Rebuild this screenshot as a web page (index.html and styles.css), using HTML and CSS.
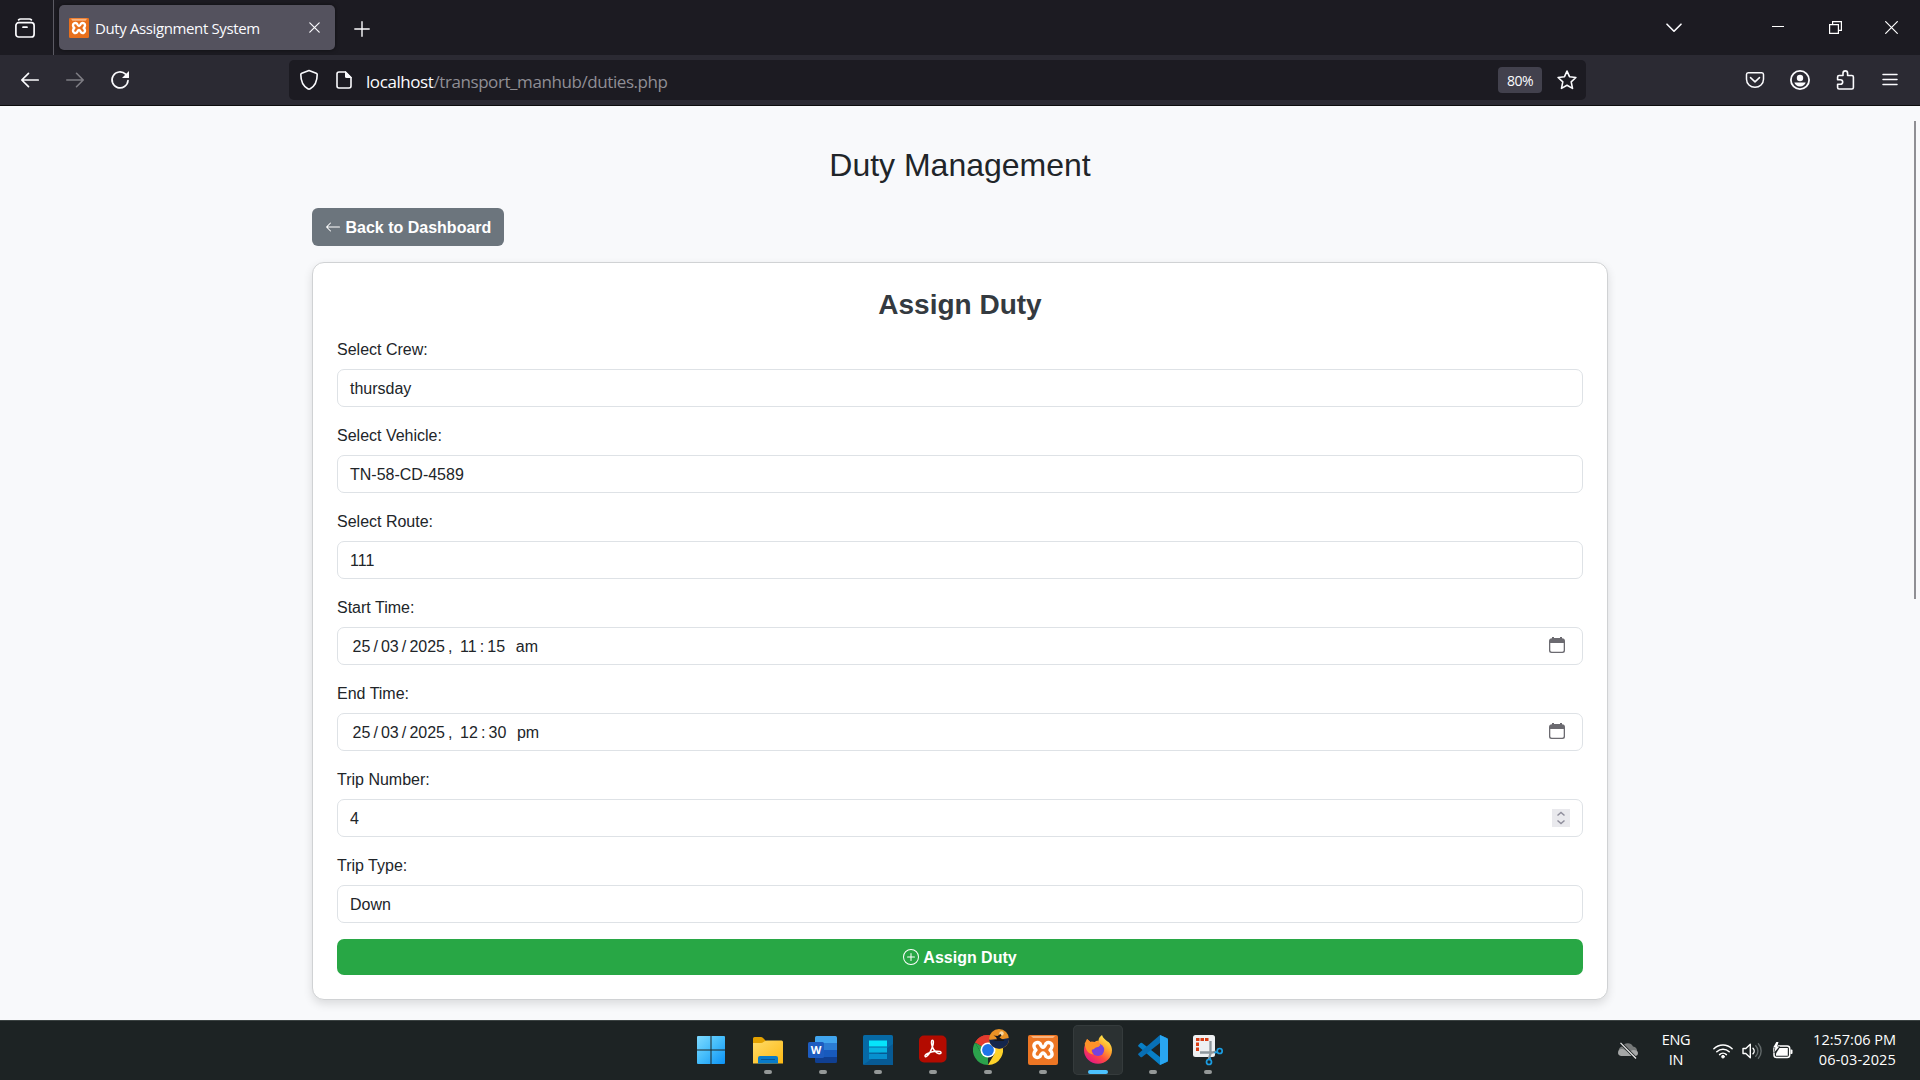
FILE: index.html
```html
<!DOCTYPE html>
<html lang="en">
<head>
<meta charset="utf-8">
<title>Duty Assignment System</title>
<link rel="stylesheet" href="styles.css">
</head>
<body>
<header class="tabbar">
  <div class="overview">
    <svg width="20" height="20" viewBox="0 0 20 20" fill="none" stroke="#fbfbfe" stroke-width="1.7" stroke-linecap="round"><path d="M3.6 1.9Q4.4 1 5.6 1h8.8q1.200 0 2 .9"/><rect x=".9" y="4.700" width="18.200" height="14.300" rx="2.800"/><path d="M8 9.200h4"/></svg>
  </div>
  <div class="tab">
    <svg width="20" height="20" viewBox="0 0 30 30"><rect width="30" height="30" rx="2" fill="#e9701c"/><path d="M3 1h24l-2 3H5z" fill="#f8b37f"/><path d="M12 8.500C9 6 5.500 8.500 6 11.500Q6.300 13.500 8 15 6.300 16.500 6 18.500C5.500 21.500 9 24 12 21.500Q13.500 18 15 18T18 21.500C21 24 24.500 21.500 24 18.500Q23.700 16.500 22 15 23.700 13.500 24 11.500C24.500 8.500 21 6 18 8.500Q16.500 12.200 15 12.200T12 8.500z" fill="none" stroke="#fff" stroke-width="3.600" stroke-linejoin="round"/></svg>
    <span class="tab-title">Duty Assignment System</span>
    <svg class="tab-close" width="11" height="11" viewBox="0 0 11 11" stroke="#fbfbfe" stroke-width="1.200" stroke-linecap="round"><path d="M.8.8l9.400 9.400M10.200.8L.8 10.200"/></svg>
  </div>
  <svg class="new-tab" width="16" height="16" viewBox="0 0 16 16" stroke="#fbfbfe" stroke-width="1.400" stroke-linecap="round"><path d="M8 .8v14.400M.8 8h14.400"/></svg>
  <div class="window-controls">
    <svg class="list-tabs" width="16" height="10" viewBox="0 0 16 10" fill="none" stroke="#fbfbfe" stroke-width="1.600" stroke-linecap="round" stroke-linejoin="round"><path d="M1 1.200l7 7 7-7"/></svg>
    <svg class="minimize" width="12" height="12" viewBox="0 0 12 12" stroke="#fff"><path d="M0 4.500h12"/></svg>
    <svg class="restore" width="13" height="13" viewBox="0 0 13 13" fill="none" stroke="#fff" stroke-width="1.200"><path d="M.6 3.600h8.800v8.800H.6zM3.600 3.500V.6h8.800v8.800H9.500"/></svg>
    <svg width="13" height="13" viewBox="0 0 13 13" stroke="#fff" stroke-width="1.200"><path d="M.3.3l12.400 12.400M12.700.3L.3 12.700"/></svg>
  </div>
</header>

<nav class="toolbar">
  <div class="nav-buttons">
    <svg width="20" height="20" viewBox="0 0 20 20" fill="none" stroke="#fbfbfe" stroke-width="1.700" stroke-linecap="round" stroke-linejoin="round"><path d="M18.200 10H2M8.500 3.300L1.800 10l6.700 6.700"/></svg>
    <svg width="20" height="20" viewBox="0 0 20 20" fill="none" stroke="#7e7d84" stroke-width="1.600" stroke-linecap="round" stroke-linejoin="round"><path d="M1.800 10H18M11.500 3.300l6.700 6.700-6.700 6.700"/></svg>
    <svg width="20" height="20" viewBox="0 0 20 20"><path d="M18 10.500A8 8 0 1 1 15.600 4.200" fill="none" stroke="#fbfbfe" stroke-width="1.700" stroke-linecap="round"/><path d="M19 1v6.500q0 .5-.5.500H12z" fill="#fbfbfe"/></svg>
  </div>
  <div class="urlbar">
    <svg width="20" height="22" viewBox="0 0 20 22" fill="none" stroke="#fbfbfe" stroke-width="1.600" stroke-linejoin="round"><path d="M10 1.600l7.200 2.600q1 .4 1 1.400c0 6.400-2.700 11.800-7 14.200a2.400 2.400 0 0 1-2.400 0c-4.300-2.400-7-7.800-7-14.200q0-1 1-1.400z"/></svg>
    <svg class="page-icon" width="16" height="18" viewBox="0 0 16 18"><path d="M9.500 1H3a2 2 0 0 0-2 2v12a2 2 0 0 0 2 2h10a2 2 0 0 0 2-2V6.500z" fill="none" stroke="#fbfbfe" stroke-width="1.600"/><path d="M9 0v5.500Q9 7 10.500 7H16z" fill="#fbfbfe"/></svg>
    <span class="url"><b>localhost</b>/transport_manhub/duties.php</span>
    <span class="zoom-level">80%</span>
    <svg class="star" width="20" height="20" viewBox="0 0 20 20" fill="none" stroke="#fbfbfe" stroke-width="1.600" stroke-linejoin="round"><path d="M10 1.100l2.500 5.600 6.400.8-4.700 4.300 1.300 6.600L10 15.300l-5.500 3.100 1.300-6.600L1.100 7.500l6.400-.8z"/></svg>
  </div>
  <div class="toolbar-actions">
    <svg width="20" height="20" viewBox="0 0 20 20" fill="none" stroke="#fbfbfe" stroke-width="1.500" stroke-linecap="round" stroke-linejoin="round"><path d="M3.200 2.800h13.600a1.800 1.800 0 0 1 1.700 1.800v4.700a8.500 8 0 0 1-17 0V4.600a1.800 1.800 0 0 1 1.700-1.800zM5.500 7.600l4.500 4.300 4.500-4.300"/></svg>
    <svg width="20" height="20" viewBox="0 0 20 20"><circle cx="10" cy="10" r="9.100" fill="none" stroke="#fbfbfe" stroke-width="1.800"/><circle cx="10" cy="8" r="3.200" fill="#fbfbfe"/><path d="M4.300 12.600h11.400c-.6 2.300-2.900 4-5.700 4s-5.100-1.700-5.700-4z" fill="#fbfbfe"/></svg>
    <svg width="20" height="20" viewBox="-.7 0 20 20" fill="none" stroke="#fbfbfe" stroke-width="1.600" stroke-linejoin="round"><path d="M7.300 5.500V3.200a2.300 2.300 0 0 1 4.600 0v2.300h4.300a1.500 1.500 0 0 1 1.500 1.500v10.500a1.500 1.500 0 0 1-1.500 1.500H3.400a1.500 1.500 0 0 1-1.500-1.500v-3.200h2.800a2.300 2.300 0 0 0 0-4.600H1.900V7a1.500 1.500 0 0 1 1.500-1.500z"/></svg>
    <svg width="20" height="20" viewBox="0 0 20 20" stroke="#fbfbfe" stroke-width="1.500" stroke-linecap="round"><path d="M3 4.600h14M3 9.500h14M3 14.400h14"/></svg>
  </div>
</nav>

<main class="page">
  <div class="container">
    <h1>Duty Management</h1>
    <a class="back"><svg width="16" height="16" viewBox="0 0 16 16" fill="#fff"><path fill-rule="evenodd" d="M15 8a.5.5 0 0 0-.5-.5H2.707l3.147-3.146a.5.5 0 1 0-.708-.708l-4 4a.5.5 0 0 0 0 .708l4 4a.5.5 0 0 0 .708-.708L2.707 8.500H14.500A.5.5 0 0 0 15 8"/></svg><span>Back to Dashboard</span></a>
    <section class="card">
      <h2>Assign Duty</h2>
      <label>Select Crew:</label>
      <div class="field">thursday</div>
      <label>Select Vehicle:</label>
      <div class="field">TN-58-CD-4589</div>
      <label>Select Route:</label>
      <div class="field">111</div>
      <label>Start Time:</label>
      <div class="field datetime"><span>25</span><span>/</span><span>03</span><span>/</span><span>2025</span><span>,&nbsp;</span><span>11</span><span>:</span><span>15</span><span>&nbsp;</span><span>am</span>
        <svg width="16" height="16" viewBox="0 0 16 16"><path d="M3 0h2v1h6V0h2v1.200q3 .2 3 2.800v9.500a2.500 2.500 0 0 1-2.500 2.500h-11A2.500 2.500 0 0 1 0 13.500V4q0-2.600 3-2.800zM1.300 6v7.300q0 1.400 1.400 1.400h10.600q1.400 0 1.400-1.400V6z" fill="#6b6a70" fill-rule="evenodd"/></svg></div>
      <label>End Time:</label>
      <div class="field datetime"><span>25</span><span>/</span><span>03</span><span>/</span><span>2025</span><span>,&nbsp;</span><span>12</span><span>:</span><span>30</span><span>&nbsp;</span><span>pm</span>
        <svg width="16" height="16" viewBox="0 0 16 16"><path d="M3 0h2v1h6V0h2v1.200q3 .2 3 2.800v9.500a2.500 2.500 0 0 1-2.500 2.500h-11A2.500 2.500 0 0 1 0 13.500V4q0-2.600 3-2.800zM1.300 6v7.300q0 1.400 1.400 1.400h10.600q1.400 0 1.400-1.400V6z" fill="#6b6a70" fill-rule="evenodd"/></svg></div>
      <label>Trip Number:</label>
      <div class="field number">4<svg width="18" height="18" viewBox="0 0 18 18" fill="none" stroke="#8f8e9c" stroke-width="1.500"><path d="M0 0h18v18H0z" fill="#e9e9ed" stroke="none"/><path d="M5.500 6.500L9 3.500l3.500 3M5.500 11.500l3.500 3 3.500-3"/></svg></div>
      <label>Trip Type:</label>
      <div class="field">Down</div>
      <div class="submit"><svg width="16" height="16" viewBox="0 0 16 16" fill="#fff"><path d="M8 15A7 7 0 1 1 8 1a7 7 0 0 1 0 14m0 1A8 8 0 1 0 8 0a8 8 0 0 0 0 16"/><path d="M8 4a.5.5 0 0 1 .5.5v3h3a.5.5 0 0 1 0 1h-3v3a.5.5 0 0 1-1 0v-3h-3a.5.5 0 0 1 0-1h3v-3A.5.5 0 0 1 8 4"/></svg><span>Assign Duty</span></div>
    </section>
  </div>
  <div class="scroll-thumb"></div>
</main>

<footer class="taskbar">
  <div class="apps">
    <div class="app start">
      <svg width="30" height="30" viewBox="0 0 30 30"><defs><linearGradient id="win" x1="0" y1="0" x2="29" y2="29" gradientUnits="userSpaceOnUse"><stop offset="0" stop-color="#83dcff"/><stop offset=".5" stop-color="#45bdfb"/><stop offset="1" stop-color="#0c92f5"/></linearGradient></defs><path d="M2 1h12.500v13.500H1V2a1 1 0 0 1 1-1zM15.500 1H28a1 1 0 0 1 1 1v12.500H15.500zM1 15.500h13.500V29H2a1 1 0 0 1-1-1zM15.500 15.500H29V28a1 1 0 0 1-1 1H15.500z" fill="url(#win)"/></svg>
    </div>
    <div class="app">
      <svg width="30" height="30" viewBox="0 0 30 30"><defs><linearGradient id="folder" x1="0" y1="0" x2="1" y2="1"><stop offset="0" stop-color="#ffdb68"/><stop offset="1" stop-color="#fdb913"/></linearGradient></defs><path d="M0 3.500A1.500 1.500 0 0 1 1.500 2H8q1 0 1.800.7L13 6v4H0z" fill="#e3a100"/><path d="M0 8h8q1.500 0 2.500-1l1.500-1q.7-.5 1.700-.5H28.500A1.500 1.500 0 0 1 30 7v21.500H0z" fill="url(#folder)"/><path d="M5 28.500V23a2 2 0 0 1 2-2h16a2 2 0 0 1 2 2v5.500z" fill="#087bc9"/><path d="M8.500 24.500h13" stroke="#075695" stroke-width="1.200" stroke-linecap="round"/></svg>
      <i></i>
    </div>
    <div class="app">
      <svg width="30" height="30" viewBox="0 0 30 30"><path d="M7 2.500A1.500 1.500 0 0 1 8.500 1h19A1.500 1.500 0 0 1 29 2.500V8H7z" fill="#41a5ee"/><path d="M7 8h22v7H7z" fill="#2b7cd3"/><path d="M7 15h22v7H7z" fill="#185abd"/><path d="M7 22h22v4.500a1.500 1.500 0 0 1-1.500 1.500h-19A1.500 1.500 0 0 1 7 26.500z" fill="#103f91"/><rect y="7" width="16" height="16" rx="1.500" fill="#1d5cc0"/><text x="8" y="19" text-anchor="middle" class="word-letter">W</text></svg>
      <i></i>
    </div>
    <div class="app">
      <svg width="30" height="30" viewBox="0 0 30 30"><rect width="30" height="30" rx="1.500" fill="#0669a5"/><path d="M0 30L30 9v21z" fill="#075a94"/><path d="M6 5.500h18v6H6z" fill="#06e4fb"/><path d="M6 12.500h18v5H6z" fill="#08b4e2"/><path d="M6 19h18v5H6z" fill="#0790cf"/></svg>
      <i></i>
    </div>
    <div class="app">
      <svg width="30" height="30" viewBox="0 0 30 30"><rect x="1" y=".5" width="27.500" height="27" rx="5" fill="#b30b00"/><path d="M7.200 21.500c-1.500-1.800 5-4.500 10-5.200 4-.5 6.700.5 5.600 2-1.500 1.700-7-1.500-8.500-6.500-1.300-4.300-1-6.500.2-6.500 2 0 .4 7.200-2.600 12-2 3.500-4 5-4.700 4.200z" fill="none" stroke="#fff" stroke-width="1.500"/></svg>
      <i></i>
    </div>
    <div class="app">
      <svg width="30" height="30" viewBox="0 0 30 30"><path d="M15 15L2 7.500A15 15 0 0 1 28 7.500H15z" fill="#e33b2e"/><path d="M15 15v15A15 15 0 0 1 2 7.500l6.500 11.200z" fill="#2ba24c"/><path d="M15 7.500h13A15 15 0 0 1 15 30l6.500-11.200z" fill="#fdd22a"/><path d="M2 7.500l6.500 11.200L15 15z" fill="#2ba24c"/><path d="M2 7.500A15 15 0 0 1 15 0v8z" fill="#e33b2e"/><circle cx="15" cy="15" r="7.500" fill="#fff"/><circle cx="15" cy="15" r="5.900" fill="#1e74e8"/></svg>
      <svg class="profile" width="20" height="20" viewBox="0 0 20 20"><circle cx="10" cy="10" r="10" fill="#e99225"/><path d="M0 10.500c3 1 5-1 8 0s7-1 12-1.500A10 10 0 0 1 0 10.500z" fill="#14264c"/><circle cx="12.500" cy="4.500" r="2.200" fill="#f8d7a0"/><path d="M4.500 6.500l4 .5 3-2 1 1.500-2 2 4 2.500 1 1H4l4-1.500-1-2.500z" fill="#171719"/></svg>
      <i></i>
    </div>
    <div class="app">
      <svg width="30" height="30" viewBox="0 0 30 30"><rect width="30" height="30" rx="2" fill="#ed7624"/><path d="M3 1h24l-2 2H5z" fill="#f8b37f"/><path d="M12 8.500C9 6 5.500 8.500 6 11.500Q6.300 13.500 8 15 6.300 16.500 6 18.500C5.500 21.500 9 24 12 21.500Q13.500 18 15 18T18 21.500C21 24 24.500 21.500 24 18.500Q23.700 16.500 22 15 23.700 13.500 24 11.500C24.500 8.500 21 6 18 8.500Q16.500 12.200 15 12.200T12 8.500z" fill="none" stroke="#fff" stroke-width="3.400" stroke-linejoin="round"/></svg>
      <i></i>
    </div>
    <div class="app active">
      <svg width="30" height="30" viewBox="0 0 30 30"><defs><linearGradient id="fox" x1=".85" y1=".05" x2=".2" y2=".95"><stop offset="0" stop-color="#fff44f"/><stop offset=".35" stop-color="#ffa62e"/><stop offset=".65" stop-color="#ff4a41"/><stop offset="1" stop-color="#e31587"/></linearGradient></defs><path d="M19 0c1 3.500 3.500 4.500 5.500 6.500 1-.3 4.500 4 4.500 8.500a14 13.800 0 0 1-28 0c0-4 1.500-7 2.500-8L4 4l3.500 3c1-.4 2.500-.4 4 0 1.500-1 3-1.500 4-1.300C15.500 3.500 17 1.500 19 0z" fill="url(#fox)"/><circle cx="15" cy="14.800" r="6.200" fill="#7543df"/><path d="M1.700 8.500L4 4l3.500 3q2-.7 5 1 1.500-2 3.500-2-1 2 1.500 4-1.500 2-4.500 2.500c-2 .5-1.500 2.500-4 2-1 1 0 4 2 5-5.500-.5-8.500-4-9.300-11z" fill="#ff9229"/></svg>
      <i></i>
    </div>
    <div class="app">
      <svg width="30" height="30" viewBox="0 0 30 30"><path d="M22 0L30 3.500v23L22 30 .5 11.500q-.8-.8 0-1.600L2.500 8q.8-.6 1.600 0L22 22z" fill="#087fc6"/><path d="M22 0v8L4.100 22q-.8.600-1.600 0L.5 20.100q-.8-.8 0-1.600z" fill="#086fb5"/><path d="M22 0L28.500 3q1.500.8 1.500 2v20q0 1.300-1.500 2L22 30z" fill="#29a6f2"/></svg>
      <i></i>
    </div>
    <div class="app">
      <svg width="30" height="30" viewBox="0 0 30 30" overflow="visible"><rect width="22" height="22" rx="2.500" fill="#eef0f2"/><path d="M3 3h3.500v3H3zM7.500 3H11v3H7.500zM12 3h3.500v3H12zM3 7.500h3V11H3zM3 12.500h3V16H3z" fill="#d83b12"/><path d="M17.500 6v12.500L15.500 25M7 17.500h12l4-1" fill="none" stroke="#8f989e" stroke-width="2.300"/><circle cx="26.700" cy="16" r="2.500" fill="none" stroke="#1b9de2" stroke-width="1.700"/><circle cx="16" cy="27" r="2.500" fill="none" stroke="#1b9de2" stroke-width="1.700"/><path d="M21.500 17.800l3-1M17.500 22.500L16.700 24.500" stroke="#1b9de2" stroke-width="1.800"/></svg>
      <i></i>
    </div>
  </div>
  <div class="tray">
    <svg class="cloud" width="20" height="18" viewBox="0 0 20 18"><path d="M5 14a5 5 0 0 1-.5-9.800A6 6 0 0 1 15 4.500a4.800 4.800 0 0 1 0 9.500z" fill="#777a7a"/><path d="M0 11a4 4 0 0 1 4-4c2 0 4 1.500 6 3l5-2q5 0 5 3a3 3 0 0 1-3 3H4a3.500 3 0 0 1-4-3z" fill="#a5a7a7"/><path d="M2.500.8L18 16.500" stroke="#1d2324" stroke-width="3"/><path d="M2.500.8L18 16.500" stroke="#eee" stroke-width="1.200"/></svg>
    <div class="language">ENG<br>IN</div>
    <svg class="wifi" width="20" height="16" viewBox="0 0 20 16" fill="none" stroke="#fff" stroke-width="1.500" stroke-linecap="round"><path d="M.9 5.700a12.900 12.900 0 0 1 18.200 0M3.800 8.800a8.800 8.800 0 0 1 12.400 0M6.600 11.600a4.900 4.900 0 0 1 6.800 0"/><circle cx="10" cy="13.700" r="1.400" fill="#fff" stroke-width=".8"/></svg>
    <svg class="speaker" width="20" height="18" viewBox="0 0 20 18" fill="none" stroke="#fff" stroke-width="1.400" stroke-linecap="round" stroke-linejoin="round"><path d="M1 6.500h2.800L8.300 2.300v13.400l-4.500-4.200H1z"/><path d="M11 6.200a4 4 0 0 1 0 5.600"/><path d="M13.700 3.800a7.200 7.200 0 0 1 0 10.400M16.400 1.800a10.800 10.800 0 0 1 0 14.400" stroke="#62696a"/></svg>
    <svg class="battery" width="20" height="18" viewBox="0 0 20 18"><rect x="1" y="4" width="15.700" height="11.600" rx="2.500" fill="none" stroke="#fff" stroke-width="1.500"/><path d="M3 13.700V11.500L6.500 6h8.300v7.700z" fill="#fff"/><path d="M17.500 7.500h1a1 1 0 0 1 1 1v2.600a1 1 0 0 1-1 1h-1z" fill="#fff"/><path d="M3.300 0L.2 5.500h2.200L1.200 10.500 6.300 4.500H4.200L5.500 0z" fill="#fff" stroke="#1d2324" stroke-width="1" paint-order="stroke"/></svg>
    <div class="clock">12:57:06 PM<br><span class="date">06-03-2025</span></div>
  </div>
</footer>
</body>
</html>
```
FILE: styles.css
```css
* { box-sizing: border-box; }
body {
  margin: 0;
  width: 1920px;
  height: 1080px;
  overflow: hidden;
  display: flex;
  flex-direction: column;
  font-family: "Liberation Sans", Arial, sans-serif;
  font-size: 16px;
  line-height: 24px;
  color: #212529;
}
svg { display: block; flex: none; }

/* Browser tab strip */
.tabbar {
  height: 55px;
  flex: none;
  display: flex;
  align-items: center;
  background: #1c1b22;
  font-family: "Open Sans", "Noto Sans", sans-serif;
}
.overview {
  width: 54px;
  height: 55px;
  padding: 18px 0 0 15px;
  border-right: 1px solid #5b5a63;
}
.tab {
  width: 276px;
  height: 45px;
  margin-left: 5px;
  padding: 0 15px 0 10px;
  display: flex;
  align-items: center;
  border-radius: 5px;
  background: #54525e;
  box-shadow: 0 0 4px #0008;
  color: #fbfbfe;
  font-size: 15px;
}
.tab-title { margin-left: 6px; padding-top: 1px; white-space: nowrap; letter-spacing: -.38px; }
.tab-close { margin-left: auto; }
.new-tab { margin: 2px 0 0 18.500px; }
.window-controls {
  margin-left: auto;
  padding-right: 22px;
  display: flex;
  align-items: center;
}
.list-tabs { margin-right: 90px; }
.minimize { margin-right: 45px; }
.restore { margin-right: 43px; }

/* Navigation toolbar */
.toolbar {
  height: 51px;
  flex: none;
  display: flex;
  align-items: center;
  padding: 0 20px;
  background: #2b2a33;
  border-bottom: 1px solid #0c0c0d;
  font-family: "Open Sans", "Noto Sans", sans-serif;
}
.nav-buttons { display: flex; gap: 25px; width: 269px; }
.urlbar {
  width: 1297px;
  height: 40px;
  padding: 0 9px 0 10px;
  display: flex;
  align-items: center;
  border-radius: 5px;
  background: #1c1b22;
}
.page-icon { margin: 0 14px 0 17px; }
.url { font-size: 17px; color: #8f8e95; letter-spacing: -.42px; padding-top: 3px; }
.url b { font-weight: 400; color: #fbfbfe; }
.zoom-level {
  width: 44px;
  height: 26px;
  margin-left: auto;
  border-radius: 4px;
  background: #42414d;
  color: #fbfbfe;
  font-size: 14px;
  line-height: 27px;
  letter-spacing: -.5px;
  text-align: center;
}
.star { margin-left: 15px; }
.toolbar-actions { display: flex; gap: 25px; margin-left: auto; }

/* Page */
.page {
  position: relative;
  flex: 1;
  display: flex;
  justify-content: center;
  background: #f8f9fb;
  overflow: hidden;
}
.container { width: 1296px; padding-top: 40px; }
h1 {
  margin: 0 0 24px;
  font-size: 32px;
  line-height: 38px;
  font-weight: 400;
  text-align: center;
}
.back {
  width: 192px;
  height: 38px;
  display: flex;
  align-items: center;
  padding-left: 13px;
  gap: 4.500px;
  border-radius: 6px;
  background: #6c757d;
  color: #fff;
  font-weight: 700;
  white-space: nowrap;
}
.back span, .submit span { padding-top: 2px; }
.card {
  height: 738px;
  margin-top: 16px;
  padding: 24px;
  display: flex;
  flex-direction: column;
  border: 1px solid #d0d2d4;
  border-radius: 12px;
  background: #fff;
  box-shadow: 0 4px 10px rgba(0, 0, 0, .12);
}
h2 {
  margin: 0 0 15px;
  padding-top: 1px;
  font-size: 28px;
  line-height: 34px;
  text-align: center;
  color: #343a40;
}
label { height: 24px; margin-bottom: 8px; padding-top: 1px; }
.field {
  height: 38px;
  margin-bottom: 16px;
  padding: 2px 12px 0;
  display: flex;
  align-items: center;
  border: 1px solid #dee2e6;
  border-radius: 7px;
}
.datetime { padding: 2px 17px 0 14.500px; gap: 3.100px; }
.datetime svg { margin: 0 0 4px auto; }
.number svg { margin: 0 0 2px auto; }
.submit {
  height: 36px;
  display: flex;
  align-items: center;
  justify-content: center;
  gap: 4px;
  border-radius: 7px;
  background: #28a745;
  color: #fff;
  font-weight: 700;
}
.scroll-thumb {
  position: absolute;
  top: 15px;
  right: 4px;
  width: 2px;
  height: 478px;
  background: #8f8f94;
}

/* Windows taskbar */
.taskbar {
  height: 60px;
  flex: none;
  display: flex;
  justify-content: space-between;
  background: #1d2324;
  border-top: 1px solid #3b4242;
  color: #fff;
  font-family: "Open Sans", "Noto Sans", sans-serif;
}
.apps { display: flex; padding-left: 682px; }
.app {
  position: relative;
  width: 55px;
  height: 59px;
  padding-top: 14px;
  display: flex;
  flex-direction: column;
  align-items: center;
}
.app.start { width: 58px; }
.app i {
  width: 8px;
  height: 4px;
  margin-top: 5px;
  border-radius: 2px;
  background: #949898;
}
.app.active {
  width: 50px;
  height: 50px;
  margin: 4px 2px 0 3px;
  padding-top: 10px;
  border-radius: 5px;
  background: #2b3132;
  box-shadow: inset 0 0 0 1px #353b3c;
}
.app.active i { width: 20px; background: #4cc2ff; }
.profile { position: absolute; left: 29px; top: 8px; }
.word-letter { font: 700 11px "Open Sans", sans-serif; fill: #fff; }
.tray {
  display: flex;
  align-items: center;
  padding: 0 24px 2px 0;
  font-size: 14.500px;
  line-height: 20px;
}
.cloud { margin: 2px 23px 0 0; }
.language { width: 30px; text-align: center; letter-spacing: -.3px; }
.wifi { margin: 2px 0 0 22px; }
.speaker { margin: 2px 0 0 9px; }
.battery { margin: 2px 0 0 11px; }
.clock { width: 103px; text-align: right; letter-spacing: 0; white-space: nowrap; }
.date { letter-spacing: .15px; }
```
